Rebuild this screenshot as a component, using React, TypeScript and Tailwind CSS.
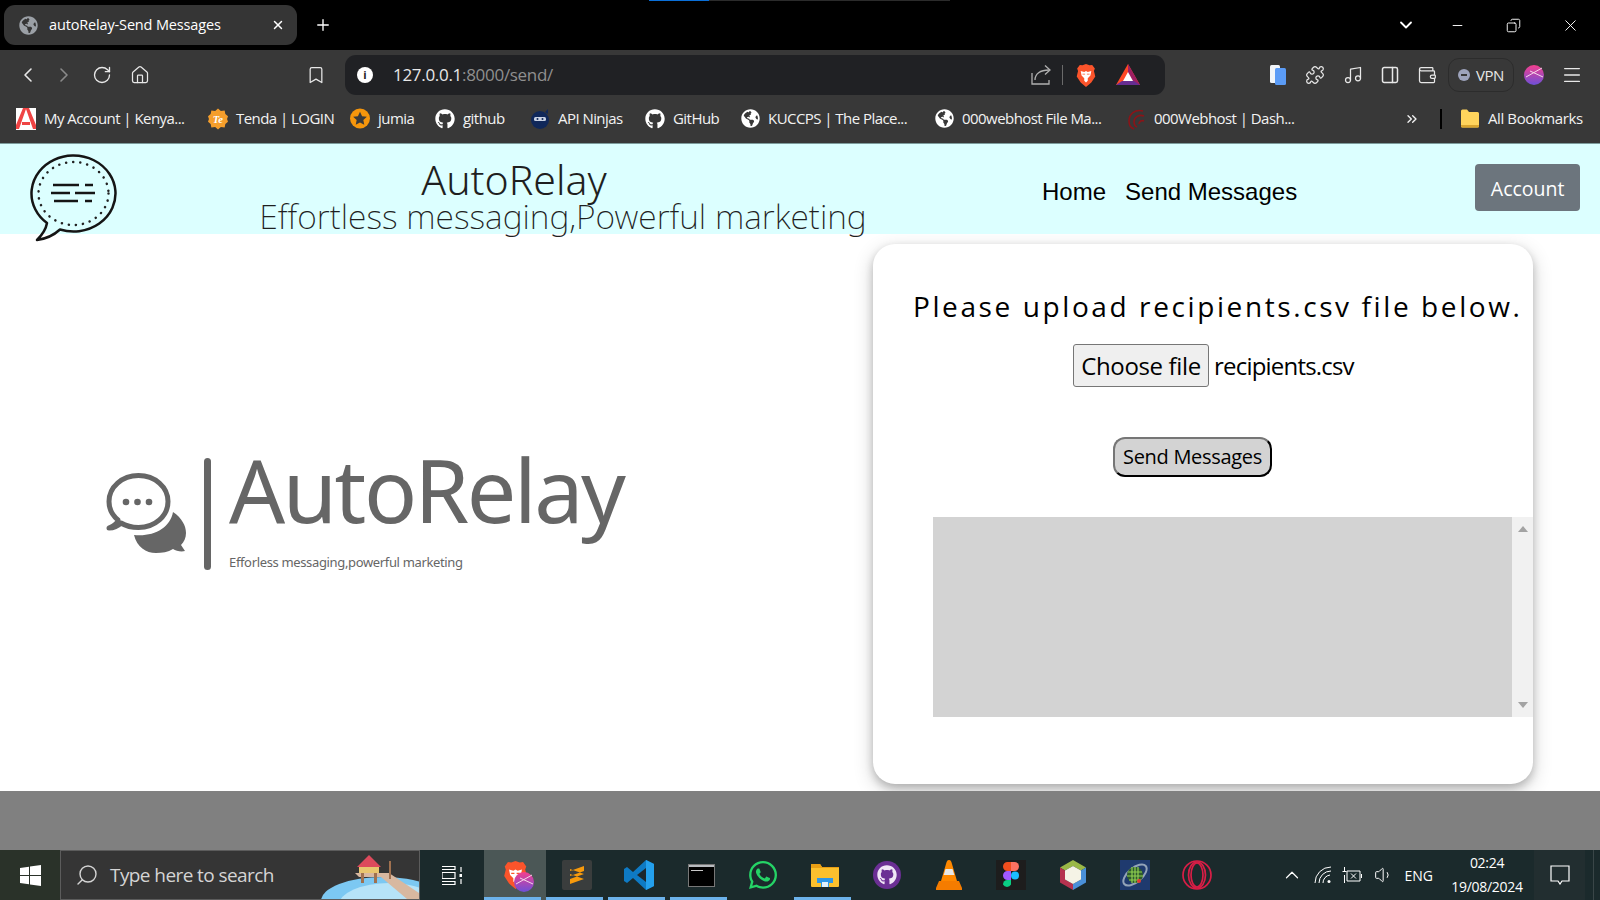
import { Bookmark, ChevronDown, ChevronLeft, ChevronRight, ChevronUp, ChevronsRight, Copy, House, Menu, Minus, Music, PanelRight, Plus, Puzzle, RotateCw, Search, Volume1, Wallet, X } from "lucide-react";
import type { ReactNode } from "react";
import { FaGithub, FaGlobeAmericas, FaWhatsapp } from "react-icons/fa";

const chromeFont = "font-['Open_Sans','Noto_Sans',sans-serif]";

function GlobeIcon({ className = "text-white" }: { className?: string }) {
  return <FaGlobeAmericas size={19} className={className} />;
}

function MailAppIcon() {
  return (
    <svg width="20" height="22" viewBox="0 0 20 22">
      <path d="M0 0h20v22H0z" fill="#fff" />
      <path d="M10 1 3 21H0V17L7 0h6l7 17v4h-3L10 1z" fill="#ef4444" />
      <path d="M6 14h8v3H6z" fill="#ef4444" />
    </svg>
  );
}

function TendaIcon() {
  return (
    <svg width="21" height="22" viewBox="0 0 21 22">
      <path d="M10.5 0l3 2.5 4-.5.7 3.700L21 8l-1 3 1 3-2.800 2.300-.7 3.700-4-.5-3 2.500-3-2.500-4 .5-.7-3.700L0 14l1-3-1-3 2.800-2.300.7-3.700 4 .5z" fill="#f59e2c" />
      <text x="5" y="15" fontSize="11" fontStyle="italic" fontWeight="700" fill="#fff" fontFamily="Liberation Serif, serif">Te</text>
    </svg>
  );
}

function JumiaIcon() {
  return (
    <svg width="21" height="21" viewBox="0 0 21 21">
      <circle cx="10.500" cy="10.500" r="10.500" fill="#f6960c" />
      <path d="M10.500 3.500l2.200 4.600 5 .6-3.700 3.400 1 5-4.500-2.500L6 17.100l1-5L3.300 8.700l5-.6z" fill="#3a3a3a" />
    </svg>
  );
}

function NinjaIcon() {
  return (
    <svg width="20" height="22" viewBox="0 0 20 22">
      <circle cx="10" cy="12" r="9" fill="#10285a" />
      <path d="M15 4l3-3v5z" fill="#10285a" />
      <rect x="4" y="9" width="12" height="4" rx="1.500" fill="#c9d2e4" />
      <circle cx="7.500" cy="11" r="1" fill="#10285a" />
      <circle cx="12.500" cy="11" r="1" fill="#10285a" />
    </svg>
  );
}

function SwirlIcon() {
  return (
    <svg width="19" height="22" viewBox="0 0 19 22" fill="none" stroke="#8b1418" strokeWidth="1.600">
      <path d="M16 3C8 1 2 6 2 13c0 4 2 7 5 8" />
      <path d="M17 8c-5-2-10 1-10 6 0 2 1 4 3 5" />
      <path d="M17 13c-2-1-5 0-5 3" />
    </svg>
  );
}

function FolderIcon() {
  return (
    <svg width="20" height="19" viewBox="0 0 20 19">
      <path d="M1 2a1.500 1.500 0 0 1 1.500-1.500H7l2 2.500h8.500A1.500 1.500 0 0 1 19 4.500V17a1.500 1.500 0 0 1-1.500 1.500h-15A1.500 1.500 0 0 1 1 17z" fill="#ffd45c" />
      <path d="M1 16h18v1a1.500 1.500 0 0 1-1.500 1.500h-15A1.500 1.500 0 0 1 1 17z" fill="#d9a52f" />
    </svg>
  );
}

function BraveIcon({ width = 20, height = 23 }: { width?: number; height?: number }) {
  return (
    <svg width={width} height={height} viewBox="0 0 22 26">
      <path d="M11 0l4 1.500 3-.5 3 4-1 3 1.500 6L17 21l-6 5-6-5-4.500-7L2 8 1 5l3-4 3 .5z" fill="#fb542b" />
      <path d="M5 8l4 1 2-1 2 1 4-1-1 5-3 3v3l-2 2-2-2v-3l-3-3z" fill="#fff" />
      <path d="M7 11h3v1H7zM12 11h3v1h-3z" fill="#fb542b" />
    </svg>
  );
}

function ShareIcon() {
  return (
    <svg width="22" height="22" viewBox="0 0 22 22" fill="none" stroke="#b0b0b0" strokeWidth="1.300">
      <path d="M2 9v11h17v-4" />
      <path d="M5 16c0-6 5-10 14-10" />
      <path d="M15 1.500 20 6l-5 4.500" />
    </svg>
  );
}

function BatIcon() {
  return (
    <svg width="24" height="22" viewBox="0 0 24 22">
      <path d="M12 0l12 21H0z" fill="#ff4724" />
      <path d="M12 0l12 21-6-0-6-10z" fill="#9e1f63" />
      <path d="M0 21l6-4h12l6 4z" fill="#662d91" />
      <path d="M12 8l5 9H7z" fill="#fff" />
    </svg>
  );
}

function PagesIcon() {
  return (
    <svg width="18" height="20" viewBox="0 0 18 20">
      <rect x="1" y="0" width="10" height="18" rx="1.500" fill="#f1f5f9" />
      <rect x="6" y="3" width="11" height="17" rx="1.500" fill="#5b9cf6" />
    </svg>
  );
}

function ProfileBall({ size = 20, id = "ball" }: { size?: number; id?: string }) {
  return (
    <svg width={size} height={size} viewBox="0 0 20 20">
      <defs>
        <linearGradient id={id} x1="0" y1="0" x2="0" y2="1">
          <stop offset="0" stopColor="#f43f8e" />
          <stop offset="1" stopColor="#6d4fd8" />
        </linearGradient>
      </defs>
      <circle cx="10" cy="10" r="10" fill={`url(#${id})`} />
      <path d="M2 12 18 3M6 6l13 6" stroke="#f6d7ea" strokeWidth="1" />
    </svg>
  );
}

function ChatBubble() {
  return (
    <svg width="90" height="90" viewBox="0 0 90 90" fill="none">
      <path d="M17 70A42 38 0 1 1 30 76.500C24 82 15 86 7 87C12 82 16 76 17 70Z" stroke="#151515" strokeWidth="2.500" strokeLinejoin="round" />
      <ellipse cx="43.500" cy="40.500" rx="35" ry="31.500" stroke="#222" strokeWidth="2.500" strokeDasharray="0.100 7" strokeLinecap="round" />
      <path d="M23 32h26M55 32h8M21 40h19M45 40h20M24 48h24M55 48h7" stroke="#151515" strokeWidth="2.600" />
    </svg>
  );
}

function LogoMark() {
  return (
    <svg width="80" height="81" viewBox="0 0 80 81">
      <path d="M12 47C6 42 3 36 3 28.500C3 14 16 2.500 32.500 2.500C49 2.500 62 14 62 28.500C62 43 49 54.500 32.500 54.500C26 54.500 20 53 15 50C11 54 7 55 3 55C7 53 12 51 12 47Z" fill="none" stroke="#666" strokeWidth="5" strokeLinejoin="round" />
      <path d="M67 39C76 45 80 53 80 60C80 65 78 69 75 72L79 78C75 79 70 78 67 76C62 79 56 80 50 80C40 80 31 74 28 62C48 64 64 55 67 39Z" fill="#666" />
      <circle cx="20" cy="29" r="3.300" fill="#666" />
      <circle cx="31.500" cy="29" r="3.300" fill="#666" />
      <circle cx="43" cy="29" r="3.300" fill="#666" />
    </svg>
  );
}

function SublimeIcon() {
  return (
    <div className="flex h-[30px] w-[30px] items-center justify-center rounded-[2px] bg-[#3a3d3d]">
      <svg width="16" height="22" viewBox="0 0 16 22">
        <path d="M1 7l14-5v5L1 12zM1 10l14 5v-5L1 5zM15 15 1 20v-5l14-5z" fill="#f89a0c" />
      </svg>
    </div>
  );
}

function CodeIcon() {
  return (
    <svg width="32" height="32" viewBox="0 0 32 32">
      <path d="M23 1l8 4v22l-8 4-13-12-6 5-3-2V10l3-2 6 5z" fill="#0e7ac4" />
      <path d="M23 9v14l-9-7z" fill="#1e1e1e" opacity=".9" />
      <path d="M23 1l8 4v22l-8 4z" fill="#24a0ed" />
    </svg>
  );
}

function TerminalIcon() {
  return (
    <div className="flex h-[23px] w-[27px] flex-col border border-[#777] bg-black">
      <div className="h-[2px] bg-[#b8bbbf]" />
      <div className="mt-[3px] ml-[2px] h-px w-[12px] bg-[#c8c8c8]" />
    </div>
  );
}

function FilesIcon() {
  return (
    <svg width="28" height="24" viewBox="0 0 28 24">
      <path d="M0 2a1 1 0 0 1 1-1h8l2 3h16a1 1 0 0 1 1 1v18a1 1 0 0 1-1 1H1a1 1 0 0 1-1-1z" fill="#fbc02d" />
      <path d="M0 5h28V4H11L9 1H1a1 1 0 0 0-1 1z" fill="#e89e14" />
      <path d="M6 15h16v5h-4v4h-8v-4H6z" fill="#2f97e6" />
      <rect x="11" y="19" width="6" height="5" fill="#fff" opacity=".85" />
    </svg>
  );
}

function GithubDesktopIcon() {
  return (
    <div className="flex h-[28px] w-[28px] items-center justify-center rounded-full bg-[#6b2f94]">
      <FaGithub size={20} className="text-[#f0e6f6]" />
    </div>
  );
}

function VlcIcon() {
  return (
    <svg width="26" height="30" viewBox="0 0 26 30">
      <path d="M13 0c2 0 2 1 3 4l5 17H5l5-17c1-3 1-4 3-4z" fill="#ff8800" />
      <path d="M9.500 9h7l1.800 6H7.700z" fill="#e8e8e8" />
      <path d="M3 21h20l3 7a1 1 0 0 1-1 2H1a1 1 0 0 1-1-2z" fill="#f57c00" />
    </svg>
  );
}

function FigmaIcon() {
  return (
    <div className="flex h-[30px] w-[30px] items-center justify-center bg-[#1d1d1d]">
      <svg width="16" height="27" viewBox="0 0 16 27">
        <path d="M0 4.500A4.500 4.500 0 0 1 4.500 0H8v9H4.500A4.500 4.500 0 0 1 0 4.500z" fill="#f24e1e" />
        <path d="M8 0h3.500a4.500 4.500 0 0 1 0 9H8z" fill="#ff7262" />
        <path d="M0 13.500A4.500 4.500 0 0 1 4.500 9H8v9H4.500A4.500 4.500 0 0 1 0 13.500z" fill="#a259ff" />
        <circle cx="12" cy="13.500" r="4" fill="#1abcfe" />
        <path d="M0 22.500A4.500 4.500 0 0 1 4.500 18H8v4.500a4.500 4.500 0 0 1-8 0z" fill="#0acf83" />
      </svg>
    </div>
  );
}

function CubeIcon() {
  return (
    <svg width="26" height="30" viewBox="0 0 26 30">
      <path d="M13 0l13 7.500-5 3L13 6l-8 4.500-5-3z" fill="#9ab847" />
      <path d="M0 7.500l5 3v9l8 4.500v6L0 22.500z" fill="#b6324f" />
      <path d="M26 7.500v15L13 30v-6l8-4.500v-9z" fill="#4a90d9" />
      <path d="M13 6l8 4.500v9L13 24l-8-4.500v-9z" fill="#f5f3e6" />
    </svg>
  );
}

function GlobeTileIcon() {
  return (
    <div className="flex h-[30px] w-[30px] items-center justify-center bg-[#1f3a6e]">
      <svg width="28" height="28" viewBox="0 0 28 28" fill="none">
        <ellipse cx="14" cy="14" rx="14" ry="7" transform="rotate(-40 14 14)" stroke="#93a3b8" strokeWidth="2" />
        <circle cx="14" cy="14" r="8" fill="#2f5a2e" />
        <path d="M7 11h14M6 15h16M8 19h12M11 6v16M14 6v16M17 6v16" stroke="#8fd14f" strokeWidth="1.200" />
        <circle cx="18" cy="20" r="2" fill="#e53935" />
      </svg>
    </div>
  );
}

function OperaIcon() {
  return (
    <svg width="30" height="30" viewBox="0 0 30 30" fill="none" stroke="#d81e46" strokeWidth="1.700">
      <circle cx="15" cy="15" r="14" />
      <ellipse cx="15" cy="15" rx="8.500" ry="13" />
      <ellipse cx="15" cy="15" rx="6" ry="12" />
    </svg>
  );
}

function TaskViewIcon() {
  return (
    <svg width="20" height="19" viewBox="0 0 20 19" fill="none" stroke="#fff" strokeWidth="1.200">
      <path d="M0 .5h13v3H0M0 6.500h13v6H0zM0 18.500h13v-3H0" />
      <path d="M19 1v5M19 13v5" />
      <path d="M17.500 8h3v3h-3z" fill="#fff" stroke="none" />
    </svg>
  );
}

function WindowsIcon() {
  return (
    <svg width="21" height="21" viewBox="0 0 21 21" fill="#fff">
      <path d="M0 3l9-1.300V10H0zM10 1.500 21 0v10H10zM0 11h9v8.300L0 18zM10 11h11v10l-11-1.500z" />
    </svg>
  );
}

function SearchArt() {
  return (
    <svg width="100" height="48" viewBox="0 0 100 48" className="absolute right-0 bottom-0">
      <ellipse cx="64" cy="50" rx="62" ry="24" fill="#7cc8f2" />
      <ellipse cx="70" cy="54" rx="50" ry="22" fill="#b6e3f8" />
      <path d="M36 22h34l30 20v6H88L62 26H40z" fill="#d8b8a0" />
      <path d="M38 16l12-12 12 12z" fill="#dd4a5c" />
      <path d="M40 16h20v6H40z" fill="#e9c66f" />
      <path d="M42 22h3v10h-3zM55 22h3v10h-3zM70 10h2v18h-2z" fill="#a0714f" />
    </svg>
  );
}

function WifiFanIcon() {
  return (
    <svg width="18" height="18" viewBox="0 0 18 18" fill="none" stroke="#fff" strokeWidth="1">
      <path d="M1 17A16 16 0 0 1 17 1" />
      <path d="M5 17A12 12 0 0 1 17 5" />
      <path d="M9 17A8 8 0 0 1 16 9" />
      <circle cx="15" cy="15.500" r="1.500" fill="#fff" stroke="none" />
    </svg>
  );
}

function BatteryIcon() {
  return (
    <svg width="20" height="18" viewBox="0 0 20 18" fill="none" stroke="#fff" strokeWidth="1">
      <path d="M5 5h13v10H5zM19.500 8v4" />
      <path d="M0.500 5.500h4M2.500 1v4M2.500 9v8M9 7.500l5 5M14 7.500l-5 5" />
    </svg>
  );
}

function BookmarkItem({ icon, label, width }: { icon: ReactNode; label: string; width: string }) {
  return (
    <div className={`flex shrink-0 items-center gap-2 ${width}`}>
      <span className="flex w-[20px] shrink-0 justify-center">{icon}</span>
      <span className="whitespace-nowrap tracking-[-0.55px]">{label}</span>
    </div>
  );
}

function TaskTile({ children, on, active }: { children: ReactNode; on?: boolean; active?: boolean }) {
  return (
    <div className={`relative flex h-full w-[62px] items-center justify-center ${active ? "bg-[#4b5756]" : ""}`}>
      {children}
      {on && <div className="absolute right-[5px] bottom-0 left-0 h-[3px] bg-[#6cb2eb]" />}
    </div>
  );
}

export default function App() {
  return (
    <div className={`relative flex h-[900px] w-[1600px] flex-col overflow-hidden bg-white ${chromeFont}`}>
      <div className="absolute top-0 left-[649px] h-px w-[60px] bg-[#0a6fd8]" />
      <div className="absolute top-0 left-[709px] h-px w-[241px] bg-[#2b2b2b]" />

      {/* tab strip */}
      <div className="flex h-[50px] shrink-0 items-center bg-black text-white">
        <div className="ml-1 flex h-10 w-[293px] items-center rounded-[11px] bg-[#353535] pr-3 pl-[15px]">
          <GlobeIcon className="text-[#9ba0a6]" />
          <span className="ml-[11px] flex-1 text-[14.500px] tracking-[-0.15px]">autoRelay-Send Messages</span>
          <X size={14} strokeWidth={2.500} />
        </div>
        <Plus size={18} strokeWidth={1.800} className="ml-[17px]" />
        <div className="ml-auto flex items-center">
          <ChevronDown size={20} strokeWidth={2.200} />
          <Minus size={15} strokeWidth={1.500} className="ml-[34px]" />
          <Copy size={15} strokeWidth={1.500} className="ml-[41px] -scale-x-100" />
          <X size={19} strokeWidth={1.200} className="mr-5 ml-[40px]" />
        </div>
      </div>

      {/* toolbar */}
      <div className="flex h-[50px] shrink-0 items-center bg-[#383838] text-[#e8e8e8]">
        <ChevronLeft size={24} strokeWidth={1.600} className="ml-4" />
        <ChevronRight size={24} strokeWidth={1.600} className="ml-3 text-[#8a8a8a]" />
        <RotateCw size={20} strokeWidth={1.600} className="ml-[16px]" />
        <House size={20} strokeWidth={1.500} className="ml-[18px]" />
        <Bookmark size={20} strokeWidth={1.500} className="ml-[156px]" />
        <div className="ml-[19px] flex h-10 w-[820px] items-center rounded-[11px] bg-[#202124] pr-[25px] pl-[12px]">
          <span className="flex h-4 w-4 items-center justify-center rounded-full bg-white text-[11px] font-bold text-[#202124]">i</span>
          <span className="ml-[20px] flex-1 text-[17px] tracking-[-0.3px]">
            127.0.0.1<span className="text-[#8f8f8f]">:8000/send/</span>
          </span>
          <ShareIcon />
          <span className="ml-[10px] h-[20px] w-px bg-[#6a6a6a]" />
          <span className="ml-[13px]"><BraveIcon /></span>
          <span className="ml-[20px]"><BatIcon /></span>
        </div>
        <span className="ml-[104px]"><PagesIcon /></span>
        <Puzzle size={20} strokeWidth={1.500} className="ml-[18px]" />
        <Music size={20} strokeWidth={1.500} className="ml-[18px]" />
        <PanelRight size={20} strokeWidth={1.800} className="ml-[17px]" />
        <Wallet size={20} strokeWidth={1.500} className="ml-[17px]" />
        <div className="ml-[11px] flex h-[34px] w-[66px] items-center justify-center gap-[6px] rounded-[11px] border border-[#2c2c2c] text-[15px] tracking-[-0.5px]">
          <span className="flex h-3 w-3 items-center justify-center rounded-full bg-[#9da3bb]">
            <span className="h-[2px] w-[6px] bg-[#383838]" />
          </span>
          VPN
        </div>
        <span className="ml-[10px]"><ProfileBall /></span>
        <Menu size={22} strokeWidth={1.500} className="ml-[17px]" />
      </div>

      {/* bookmarks */}
      <div className="flex h-[43px] shrink-0 items-center bg-[#383838] pb-[6px] pl-[16px] text-[15px] text-[#f2f2f2]">
        <BookmarkItem width="w-[192px]" icon={<MailAppIcon />} label="My Account | Kenya..." />
        <BookmarkItem width="w-[142px]" icon={<TendaIcon />} label="Tenda | LOGIN" />
        <BookmarkItem width="w-[85px]" icon={<JumiaIcon />} label="jumia" />
        <BookmarkItem width="w-[95px]" icon={<FaGithub size={20} className="text-white" />} label="github" />
        <BookmarkItem width="w-[115px]" icon={<NinjaIcon />} label="API Ninjas" />
        <BookmarkItem width="w-[95px]" icon={<FaGithub size={20} className="text-white" />} label="GitHub" />
        <BookmarkItem width="w-[194px]" icon={<GlobeIcon />} label="KUCCPS | The Place..." />
        <BookmarkItem width="w-[192px]" icon={<GlobeIcon />} label="000webhost File Ma..." />
        <BookmarkItem width="w-[278px]" icon={<SwirlIcon />} label="000Webhost | Dash..." />
        <ChevronsRight size={16} strokeWidth={2} />
        <span className="ml-[20px] h-[20px] w-[2px] bg-black" />
        <span className="ml-[18px]"><FolderIcon /></span>
        <span className="ml-2 tracking-[-0.4px] whitespace-nowrap">All Bookmarks</span>
      </div>
      <div className="h-px shrink-0 bg-[#7d9c9c]" />

      {/* site header */}
      <header className="relative flex h-[90px] shrink-0 items-center bg-[#dcffff] font-['Noto_Sans',sans-serif]">
        <div className="absolute top-[9px] left-[30px]"><ChatBubble /></div>
        <div className="mt-[18px] ml-[258px] flex w-[610px] flex-col items-center text-[#1f1f1f]">
          <div className="-ml-[98px] text-[41px] leading-[37px] font-light">AutoRelay</div>
          <div className="text-[33.700px] leading-[37px] font-extralight whitespace-nowrap">Effortless messaging,Powerful marketing</div>
        </div>
        <nav className="mt-[6px] ml-[174px] flex gap-[19px] font-['Liberation_Sans',sans-serif] text-[24px] text-black">
          <a>Home</a>
          <a>Send Messages</a>
        </nav>
        <button className="ml-[178px] -mt-[4px] h-[47px] w-[105px] rounded bg-[#6c757d] pt-[3px] font-['Open_Sans',sans-serif] text-[19.500px] text-white">Account</button>
      </header>

      {/* page body */}
      <main className="flex h-[557px] shrink-0 items-start bg-white">
        <div className="mt-[239px] ml-[106px] flex w-[767px] items-start">
          <LogoMark />
          <div className="mt-[-15px] ml-[18px] h-[112px] w-[7px] rounded-full bg-[#666]" />
          <div className="-mt-[44px] ml-[18px] flex flex-col font-['Noto_Sans',sans-serif] text-[#666]">
            <span className="text-[88px] leading-[120px] tracking-[-2.500px]">AutoRelay</span>
            <span className="mt-[4px] text-[13px] leading-[18px] tracking-[-0.35px]">Efforless messaging,powerful marketing</span>
          </div>
        </div>
        <section className="mt-[10px] flex h-[540px] w-[660px] flex-col rounded-[22px] bg-white pt-[42px] font-['Open_Sans',sans-serif] text-black shadow-[0_4px_8px_rgba(0,0,0,0.2),0_6px_20px_rgba(0,0,0,0.19)]">
          <h2 className="ml-10 text-[28px] leading-[40px] font-normal tracking-[2.600px] whitespace-nowrap">Please upload recipients.csv file below.</h2>
          <div className="mt-[18px] ml-[200px] flex items-center">
            <button className="h-[43px] w-[136px] rounded-[3px] border border-[#767676] bg-[#efefef] text-[24px] tracking-[-0.35px]">Choose file</button>
            <span className="ml-[5px] text-[24px] tracking-[-0.8px]">recipients.csv</span>
          </div>
          <button className="mt-[50px] ml-[240px] h-[40px] w-[159px] rounded-[12px] border-2 border-t-[#767676] border-r-black border-b-black border-l-[#767676] bg-[#d3d3d3] text-[20px] tracking-[-0.3px]">Send Messages</button>
          <div className="mt-[40px] ml-[60px] flex h-[200px]">
            <div className="w-[579px] bg-[#d3d3d3]" />
            <div className="flex w-[21px] flex-col items-center justify-between bg-[#f1f1f1] py-[9px]">
              <span className="h-0 w-0 border-x-[5px] border-b-[6px] border-x-transparent border-b-[#a3a3a3]" />
              <span className="h-0 w-0 border-x-[5px] border-t-[6px] border-x-transparent border-t-[#a3a3a3]" />
            </div>
          </div>
        </section>
      </main>

      <div className="h-[59px] shrink-0 bg-[#808080]" />

      {/* windows taskbar */}
      <footer className="flex h-[50px] shrink-0 items-center bg-[#1b2a2c] text-white">
        <div className="flex h-full w-[60px] items-center justify-center bg-[#2a3229]"><WindowsIcon /></div>
        <div className="relative flex h-full w-[360px] items-center overflow-hidden border border-[#5c5c5c] bg-[#353535] pl-[14px] text-[19px] text-[#d4d4d4]">
          <Search size={24} strokeWidth={1.400} className="-scale-x-100" />
          <span className="ml-[11px] tracking-[-0.58px]">Type here to search</span>
          <SearchArt />
        </div>
        <div className="flex h-full w-[64px] items-center justify-center"><TaskViewIcon /></div>
        <TaskTile active on>
          <BraveIcon width={25} height={28} />
          <span className="absolute right-[12px] bottom-[8px]"><ProfileBall size={20} id="ball-task" /></span>
        </TaskTile>
        <TaskTile on><SublimeIcon /></TaskTile>
        <TaskTile on><CodeIcon /></TaskTile>
        <TaskTile on><TerminalIcon /></TaskTile>
        <TaskTile><FaWhatsapp size={32} className="text-[#25d366]" /></TaskTile>
        <TaskTile on><FilesIcon /></TaskTile>
        <TaskTile><GithubDesktopIcon /></TaskTile>
        <TaskTile><VlcIcon /></TaskTile>
        <TaskTile><FigmaIcon /></TaskTile>
        <TaskTile><CubeIcon /></TaskTile>
        <TaskTile><GlobeTileIcon /></TaskTile>
        <TaskTile><OperaIcon /></TaskTile>
        <div className="ml-auto flex h-full items-center">
          <ChevronUp size={22} strokeWidth={1.300} />
          <span className="ml-[11px]"><WifiFanIcon /></span>
          <span className="ml-[10px]"><BatteryIcon /></span>
          <Volume1 size={20} strokeWidth={1.200} className="ml-[12px]" />
          <span className="ml-[11px] text-[14px]">ENG</span>
          <div className="ml-[14px] flex w-[80px] flex-col items-center text-[14px] leading-[24px] tracking-[-0.3px]">
            <span>02:24</span>
            <span>19/08/2024</span>
          </div>
          <div className="ml-[7px] flex h-full w-[51px] items-center justify-center bg-[#222e30]">
            <svg width="20" height="20" viewBox="0 0 20 20" fill="none" stroke="#fff" strokeWidth="1.200"><path d="M1 1h18v15h-7l-2 3-2-3H1z" /></svg>
          </div>
          <div className="ml-[8px] h-full w-px bg-[#3a4648]" />
          <div className="w-[6px]" />
        </div>
      </footer>
    </div>
  );
}
